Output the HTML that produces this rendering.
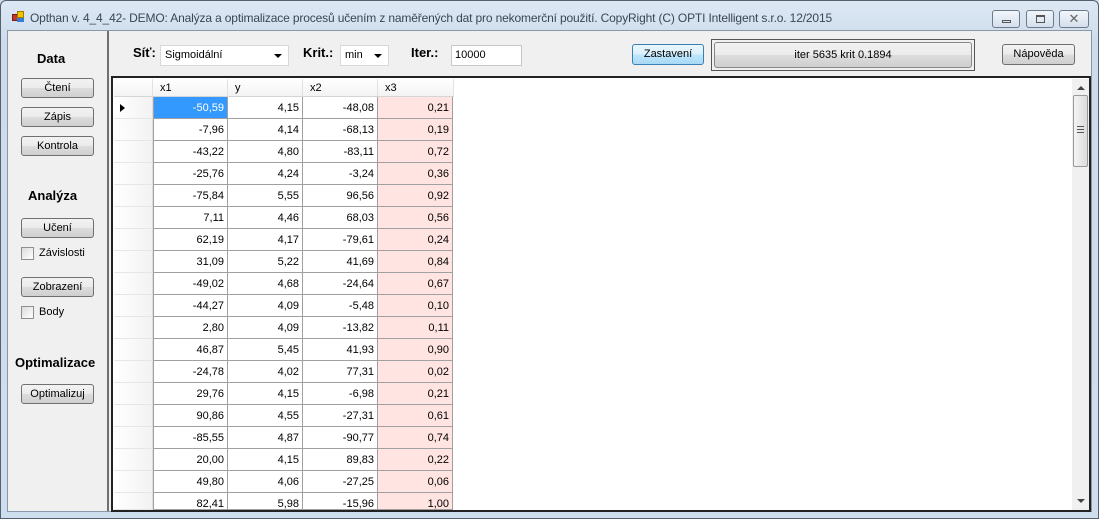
<!DOCTYPE html>
<html><head><meta charset="utf-8"><style>
*{box-sizing:border-box;margin:0;padding:0}
body{width:1099px;height:519px;position:relative;overflow:hidden;background:#cfdeee;font-family:"Liberation Sans",sans-serif;font-size:11px;color:#000}
.a{position:absolute}
.win{left:0;top:0;width:1099px;height:519px;border:1px solid #55606e;border-radius:6px 6px 0 0;background:linear-gradient(#dde8f4,#cddcec 40px,#cfdeee)}
.client{left:7px;top:30px;width:1085px;height:482px;background:#f0f0f0;border:1px solid #8a97a6}
.btn{position:absolute;border:1px solid #707070;border-radius:3px;background:linear-gradient(#f2f2f2 0%,#ebebeb 50%,#dddddd 51%,#cfcfcf 100%);text-align:center;font-size:11px;line-height:18px}
.lbl{position:absolute;font-weight:bold;font-size:13px}
.cb{position:absolute;width:13px;height:13px;border:1px solid #8e8f8f;background:linear-gradient(135deg,#dcdcdc,#fff)}
.combo{position:absolute;background:#fff;border:1px solid #d8d8d8;height:21px;line-height:19px;padding-left:4px}
.combo:after{content:"";position:absolute;right:6px;top:8px;border-left:4px solid transparent;border-right:4px solid transparent;border-top:4px solid #000}
.cell{position:absolute;height:22px;line-height:23px;text-align:right;padding-right:3px;border-right:1px solid #a0a0a0;border-bottom:1px solid #a0a0a0;background:#fff}
.hd{position:absolute;top:79px;height:18px;line-height:19px;padding-left:7px;background:linear-gradient(#fff,#f3f3f3);border-right:1px solid #e2e2e2;border-bottom:1px solid #d5d5d5}
.rh{position:absolute;left:114px;width:39px;height:22px;background:linear-gradient(90deg,#fff,#f2f2f2);border-bottom:1px solid #e6e6e6;border-right:1px solid #ddd}
</style></head><body>
<div class="a win"></div>
<div class="a" style="left:12px;top:14px;width:6px;height:7px;background:#c0392b;border:1px solid #7a1a10"></div>
<div class="a" style="left:17px;top:11px;width:7px;height:7px;background:#f5c400;border:1px solid #a07c00"></div>
<div class="a" style="left:17px;top:18px;width:7px;height:4px;background:#3a7bd5"></div>
<div class="a" style="left:30px;top:11px;font-size:12px;color:#3a4654;white-space:nowrap;letter-spacing:-0.15px">Opthan v. 4_4_42- DEMO: Analýza a optimalizace procesů učením z naměřených dat pro nekomerční použití. CopyRight (C) OPTI Intelligent s.r.o. 12/2015</div>
<div class="a" style="left:992px;top:10px;width:28px;height:18px;border:1px solid #6d7a8a;border-radius:3px;background:linear-gradient(#f2f6fb,#d4dfec)"><div class="a" style="left:9px;top:9px;width:9px;height:3px;border:1px solid #555"></div></div>
<div class="a" style="left:1026px;top:10px;width:28px;height:18px;border:1px solid #6d7a8a;border-radius:3px;background:linear-gradient(#f2f6fb,#d4dfec)"><div class="a" style="left:9px;top:4px;width:9px;height:8px;border:1px solid #555;border-top-width:2px"></div></div>
<div class="a" style="left:1059px;top:10px;width:30px;height:18px;border:1px solid #6d7a8a;border-radius:3px;background:linear-gradient(#f2f6fb,#d4dfec);text-align:center;line-height:16px;font-size:13px;color:#666">✕</div>
<div class="a client"></div>
<div class="a" style="left:9px;top:31px;width:100px;height:480px;border-right:2px solid #707070"></div>
<div class="lbl" style="left:37px;top:51px">Data</div>
<div class="btn" style="left:21px;top:78px;width:73px;height:20px">Čtení</div>
<div class="btn" style="left:21px;top:107px;width:73px;height:20px">Zápis</div>
<div class="btn" style="left:21px;top:136px;width:73px;height:20px">Kontrola</div>
<div class="lbl" style="left:28px;top:188px">Analýza</div>
<div class="btn" style="left:21px;top:218px;width:73px;height:20px">Učení</div>
<div class="cb" style="left:21px;top:247px"></div><div class="a" style="left:39px;top:247px">Závislosti</div>
<div class="btn" style="left:21px;top:277px;width:73px;height:20px">Zobrazení</div>
<div class="cb" style="left:21px;top:306px"></div><div class="a" style="left:39px;top:306px">Body</div>
<div class="lbl" style="left:15px;top:355px">Optimalizace</div>
<div class="btn" style="left:21px;top:384px;width:73px;height:20px">Optimalizuj</div>
<div class="lbl" style="left:133px;top:45px">Síť:</div>
<div class="combo" style="left:160px;top:45px;width:129px">Sigmoidální</div>
<div class="lbl" style="left:303px;top:45px">Krit.:</div>
<div class="combo" style="left:340px;top:45px;width:49px">min</div>
<div class="lbl" style="left:411px;top:45px">Iter.:</div>
<div class="a" style="left:451px;top:45px;width:71px;height:21px;background:#fff;border:1px solid #c8c8c8;line-height:19px;padding-left:3px">10000</div>
<div class="btn" style="left:632px;top:44px;width:72px;height:21px;border-color:#3c7fb1;background:linear-gradient(#eaf6fd,#d9f0fc 50%,#bee6fd 51%,#a7d9f5)">Zastavení</div>
<div class="a" style="left:711px;top:39px;width:264px;height:32px;border:1px solid #555;padding:2px"><div class="btn" style="position:relative;width:100%;height:100%;line-height:24px;border-color:#888">iter 5635 krit 0.1894</div></div>
<div class="btn" style="left:1002px;top:44px;width:73px;height:21px">Nápověda</div>
<div class="a" style="left:111px;top:76px;width:980px;height:436px;border:2px solid #222;background:#fff"></div>
<div class="a" style="left:114px;top:79px;width:39px;height:18px;background:linear-gradient(#fff,#f3f3f3);border-bottom:1px solid #d5d5d5;border-right:1px solid #e2e2e2"></div>
<div class="hd" style="left:153px;width:75px">x1</div>
<div class="hd" style="left:228px;width:75px">y</div>
<div class="hd" style="left:303px;width:75px">x2</div>
<div class="hd" style="left:378px;width:76px">x3</div>
<div id="rows"></div>
<div class="a" style="left:120px;top:104px;border-top:4px solid transparent;border-bottom:4px solid transparent;border-left:5px solid #000"></div>
<div class="a" style="left:1072px;top:79px;width:17px;height:431px;background:#f0f0f0"></div>
<div class="a" style="left:1077px;top:86px;border-left:4px solid transparent;border-right:4px solid transparent;border-bottom:4px solid #444"></div>
<div class="a" style="left:1073px;top:95px;width:15px;height:72px;border:1px solid #999;border-radius:2px;background:linear-gradient(90deg,#f4f4f4,#dcdcdc)"></div>
<div class="a" style="left:1077px;top:126px;width:7px;height:7px;border-top:1px solid #555;border-bottom:1px solid #555"><div style="margin-top:2px;height:1px;background:#555"></div></div>
<div class="a" style="left:1077px;top:499px;border-left:4px solid transparent;border-right:4px solid transparent;border-top:4px solid #444"></div>
<script>
var d=[["-50,59","4,15","-48,08","0,21"],["-7,96","4,14","-68,13","0,19"],["-43,22","4,80","-83,11","0,72"],["-25,76","4,24","-3,24","0,36"],["-75,84","5,55","96,56","0,92"],["7,11","4,46","68,03","0,56"],["62,19","4,17","-79,61","0,24"],["31,09","5,22","41,69","0,84"],["-49,02","4,68","-24,64","0,67"],["-44,27","4,09","-5,48","0,10"],["2,80","4,09","-13,82","0,11"],["46,87","5,45","41,93","0,90"],["-24,78","4,02","77,31","0,02"],["29,76","4,15","-6,98","0,21"],["90,86","4,55","-27,31","0,61"],["-85,55","4,87","-90,77","0,74"],["20,00","4,15","89,83","0,22"],["49,80","4,06","-27,25","0,06"],["82,41","5,98","-15,96","1,00"]];
var h="",L=[153,228,303,378];
for(var i=0;i<d.length;i++){var t=97+22*i;var hh=Math.min(22,510-t);
h+='<div class="rh" style="top:'+t+'px;height:'+hh+'px"></div>';
for(var j=0;j<4;j++){var bg=j==3?"#ffe4e1":"#fff",c="#000";if(i==0&&j==0){bg="#3399ff";c="#fff"}
h+='<div class="cell" style="left:'+L[j]+'px;top:'+t+'px;width:75px;height:'+hh+'px;background:'+bg+';color:'+c+(j==0?';border-left:1px solid #a0a0a0':'')+'">'+d[i][j]+'</div>';}}
document.getElementById("rows").innerHTML=h;
</script>
</body></html>
